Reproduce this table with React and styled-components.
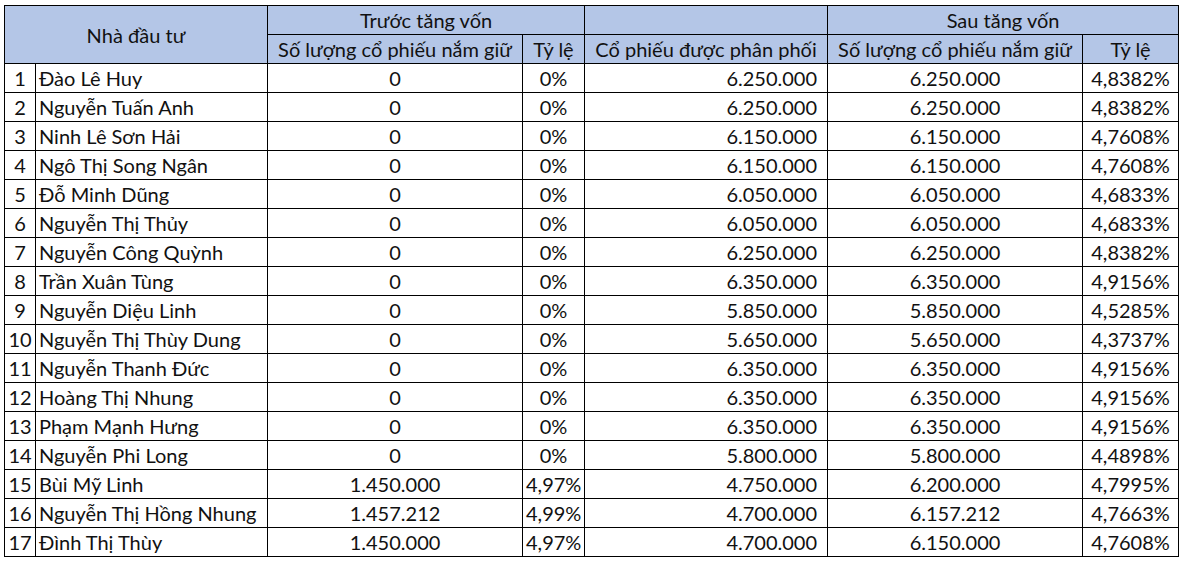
import React from 'react';
import styled, { createGlobalStyle } from 'styled-components';

const GlobalStyle = createGlobalStyle`
  body {
    margin: 0;
    background: #fff;
    font-family: Lato, "Open Sans", sans-serif;
  }
`;

const rows = [
  ['Đào Lê Huy', '0', '0%', '6.250.000', '6.250.000', '4,8382%'],
  ['Nguyễn Tuấn Anh', '0', '0%', '6.250.000', '6.250.000', '4,8382%'],
  ['Ninh Lê Sơn Hải', '0', '0%', '6.150.000', '6.150.000', '4,7608%'],
  ['Ngô Thị Song Ngân', '0', '0%', '6.150.000', '6.150.000', '4,7608%'],
  ['Đỗ Minh Dũng', '0', '0%', '6.050.000', '6.050.000', '4,6833%'],
  ['Nguyễn Thị Thủy', '0', '0%', '6.050.000', '6.050.000', '4,6833%'],
  ['Nguyễn Công Quỳnh', '0', '0%', '6.250.000', '6.250.000', '4,8382%'],
  ['Trần Xuân Tùng', '0', '0%', '6.350.000', '6.350.000', '4,9156%'],
  ['Nguyễn Diệu Linh', '0', '0%', '5.850.000', '5.850.000', '4,5285%'],
  ['Nguyễn Thị Thùy Dung', '0', '0%', '5.650.000', '5.650.000', '4,3737%'],
  ['Nguyễn Thanh Đức', '0', '0%', '6.350.000', '6.350.000', '4,9156%'],
  ['Hoàng Thị Nhung', '0', '0%', '6.350.000', '6.350.000', '4,9156%'],
  ['Phạm Mạnh Hưng', '0', '0%', '6.350.000', '6.350.000', '4,9156%'],
  ['Nguyễn Phi Long', '0', '0%', '5.800.000', '5.800.000', '4,4898%'],
  ['Bùi Mỹ Linh', '1.450.000', '4,97%', '4.750.000', '6.200.000', '4,7995%'],
  ['Nguyễn Thị Hồng Nhung', '1.457.212', '4,99%', '4.700.000', '6.157.212', '4,7663%'],
  ['Đình Thị Thùy', '1.450.000', '4,97%', '4.700.000', '6.150.000', '4,7608%'],
];

const widths = [31, 232, 255, 62, 243, 255, 96];

const Sheet = styled.table`
  margin: 5px 0 0 4px;
  border-collapse: collapse;
  table-layout: fixed;
  width: 1175px;
  font-size: 20px;
  color: #111;
`;

const HeadCell = styled.th`
  background: #b4c6e7;
  border: 1px solid #000;
  height: 28px;
  padding: 0 2px;
  font-weight: 400;
  text-align: center;
  white-space: nowrap;
  overflow: hidden;
  line-height: 28px;
`;

const Cell = styled.td`
  border: 1px solid #000;
  height: 28px;
  padding: ${({ align }) => (align === 'right' ? '0 10px 0 2px' : '0 3px')};
  text-align: ${({ align }) => align || 'center'};
  white-space: nowrap;
  overflow: hidden;
  line-height: 28px;
`;

export default function App() {
  return (
    <>
      <GlobalStyle />
      <Sheet>
        <colgroup>
          {widths.map((w, i) => (
            <col key={i} style={{ width: w }} />
          ))}
        </colgroup>
        <thead>
          <tr>
            <HeadCell colSpan={2} rowSpan={2}>Nhà đầu tư</HeadCell>
            <HeadCell colSpan={2}>Trước tăng vốn</HeadCell>
            <HeadCell />
            <HeadCell colSpan={2}>Sau tăng vốn</HeadCell>
          </tr>
          <tr>
            <HeadCell>Số lượng cổ phiếu nắm giữ</HeadCell>
            <HeadCell>Tỷ lệ</HeadCell>
            <HeadCell>Cổ phiếu được phân phối</HeadCell>
            <HeadCell>Số lượng cổ phiếu nắm giữ</HeadCell>
            <HeadCell>Tỷ lệ</HeadCell>
          </tr>
        </thead>
        <tbody>
          {rows.map((r, i) => (
            <tr key={i}>
              <Cell>{i + 1}</Cell>
              <Cell align="left">{r[0]}</Cell>
              <Cell>{r[1]}</Cell>
              <Cell>{r[2]}</Cell>
              <Cell align="right">{r[3]}</Cell>
              <Cell>{r[4]}</Cell>
              <Cell>{r[5]}</Cell>
            </tr>
          ))}
        </tbody>
      </Sheet>
    </>
  );
}
